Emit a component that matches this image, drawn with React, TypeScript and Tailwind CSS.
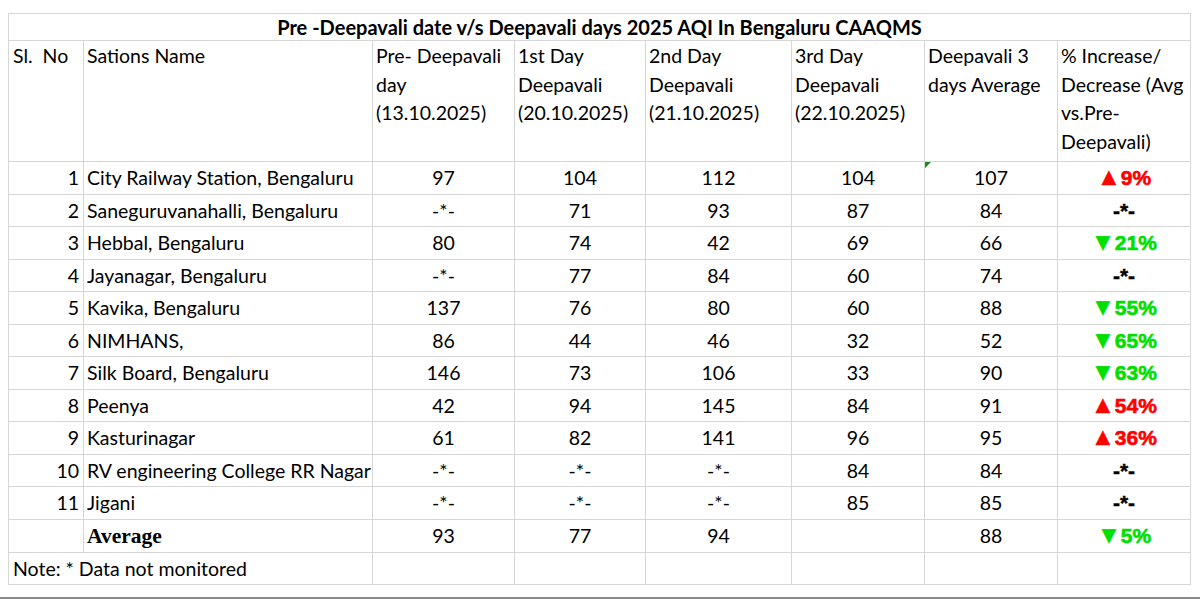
import React from "react";

type Change = { dir: "up" | "down"; value: string } | null;

const rows: {
  no: string;
  name: string;
  vals: string[];
  avg: string;
  change: Change;
}[] = [
  { no: "1", name: "City Railway Station, Bengaluru", vals: ["97", "104", "112", "104"], avg: "107", change: { dir: "up", value: "9%" } },
  { no: "2", name: "Saneguruvanahalli, Bengaluru", vals: ["-*-", "71", "93", "87"], avg: "84", change: null },
  { no: "3", name: "Hebbal, Bengaluru", vals: ["80", "74", "42", "69"], avg: "66", change: { dir: "down", value: "21%" } },
  { no: "4", name: "Jayanagar, Bengaluru", vals: ["-*-", "77", "84", "60"], avg: "74", change: null },
  { no: "5", name: "Kavika, Bengaluru", vals: ["137", "76", "80", "60"], avg: "88", change: { dir: "down", value: "55%" } },
  { no: "6", name: "NIMHANS,", vals: ["86", "44", "46", "32"], avg: "52", change: { dir: "down", value: "65%" } },
  { no: "7", name: "Silk Board, Bengaluru", vals: ["146", "73", "106", "33"], avg: "90", change: { dir: "down", value: "63%" } },
  { no: "8", name: "Peenya", vals: ["42", "94", "145", "84"], avg: "91", change: { dir: "up", value: "54%" } },
  { no: "9", name: "Kasturinagar", vals: ["61", "82", "141", "96"], avg: "95", change: { dir: "up", value: "36%" } },
  { no: "10", name: "RV engineering College RR Nagar", vals: ["-*-", "-*-", "-*-", "84"], avg: "84", change: null },
  { no: "11", name: "Jigani", vals: ["-*-", "-*-", "-*-", "85"], avg: "85", change: null },
];

const cell = "border border-[#d6d6d6] p-0";
const rowH = "h-[32.5px]";
const arial = { fontFamily: "'Liberation Sans', Arial, sans-serif" };

function ChangeCell({ change }: { change: Change }) {
  if (!change) {
    return <span className="font-bold text-black [-webkit-text-stroke:0.4px_black]">-*-</span>;
  }
  const up = change.dir === "up";
  return (
    <span
      className={
        up
          ? "font-bold text-[#ff0000] [-webkit-text-stroke:0.6px_#ff0000]"
          : "font-bold text-[#00e000] [-webkit-text-stroke:0.6px_#00e000]"
      }
    >
      <span className="text-[24px] leading-none">{up ? "▲" : "▼"}</span>
      {change.value}
    </span>
  );
}

export default function App() {
  return (
    <div
      className="h-[599px] w-[1200px] overflow-hidden border-b-2 border-[#8a8a8a] bg-white text-black"
      style={{ fontFamily: "Lato, 'Open Sans', sans-serif" }}
    >
      <table className="ml-[8px] mt-[13px] table-fixed border-collapse text-[19.5px]">
        <colgroup>
          <col className="w-[75px]" />
          <col className="w-[289px]" />
          <col className="w-[142px]" />
          <col className="w-[131px]" />
          <col className="w-[146px]" />
          <col className="w-[133px]" />
          <col className="w-[133px]" />
          <col className="w-[133px]" />
        </colgroup>
        <tbody>
          <tr className="h-[27px]">
            <td colSpan={8} className={`${cell} text-center text-[20px] font-bold leading-[26px]`}>
              Pre -Deepavali date v/s Deepavali days 2025 AQI In Bengaluru CAAQMS
            </td>
          </tr>
          <tr className="h-[121px] align-top leading-[28.5px]">
            <td className={`${cell} whitespace-pre pl-[4px] pt-[1px]`}>Sl.  No</td>
            <td className={`${cell} pl-[3px] pt-[1px]`}>Sations Name</td>
            <td className={`${cell} whitespace-nowrap pl-[3px] pt-[1px]`}>
              Pre- Deepavali
              <br />
              day
              <br />
              (13.10.2025)
            </td>
            <td className={`${cell} whitespace-nowrap pl-[3px] pt-[1px]`}>
              1st Day
              <br />
              Deepavali
              <br />
              (20.10.2025)
            </td>
            <td className={`${cell} whitespace-nowrap pl-[3px] pt-[1px]`}>
              2nd Day
              <br />
              Deepavali
              <br />
              (21.10.2025)
            </td>
            <td className={`${cell} whitespace-nowrap pl-[3px] pt-[1px]`}>
              3rd Day
              <br />
              Deepavali
              <br />
              (22.10.2025)
            </td>
            <td className={`${cell} whitespace-nowrap pl-[3px] pt-[1px]`}>
              Deepavali 3
              <br />
              days Average
            </td>
            <td className={`${cell} whitespace-nowrap pl-[3px] pt-[1px]`}>
              % Increase/
              <br />
              Decrease (Avg
              <br />
              vs.Pre-
              <br />
              Deepavali)
            </td>
          </tr>
          {rows.map((r, i) => (
            <tr key={r.no} className={`${rowH} align-middle`}>
              <td className={`${cell} pr-[4px] text-right`}>{r.no}</td>
              <td className={`${cell} whitespace-nowrap pl-[3px]`}>{r.name}</td>
              {r.vals.map((v, j) => (
                <td key={j} className={`${cell} text-center`}>
                  {v}
                </td>
              ))}
              <td className={`${cell} relative text-center`}>
                {i === 0 && (
                  <span className="absolute left-0 top-0 h-0 w-0 border-r-[6px] border-t-[6px] border-r-transparent border-t-[#1a8a1a]" />
                )}
                {r.avg}
              </td>
              <td className={`${cell} text-center text-[21px]`} style={arial}>
                <ChangeCell change={r.change} />
              </td>
            </tr>
          ))}
          <tr className={`${rowH} align-middle`}>
            <td className={cell} />
            <td
              className={`${cell} pl-[3px] text-[21.5px] font-bold`}
              style={{ fontFamily: "'Liberation Serif', 'Times New Roman', serif" }}
            >
              Average
            </td>
            <td className={`${cell} text-center`}>93</td>
            <td className={`${cell} text-center`}>77</td>
            <td className={`${cell} text-center`}>94</td>
            <td className={cell} />
            <td className={`${cell} text-center`}>88</td>
            <td className={`${cell} text-center text-[21px]`} style={arial}>
              <ChangeCell change={{ dir: "down", value: "5%" }} />
            </td>
          </tr>
          <tr className={`${rowH} align-middle`}>
            <td colSpan={2} className={`${cell} whitespace-nowrap pl-[4px]`}>
              Note: * Data not monitored
            </td>
            <td className={cell} />
            <td className={cell} />
            <td className={cell} />
            <td className={cell} />
            <td className={cell} />
            <td className={cell} />
          </tr>
        </tbody>
      </table>
    </div>
  );
}
